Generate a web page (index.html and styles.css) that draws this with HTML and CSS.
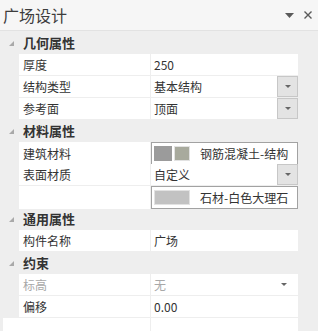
FILE: index.html
```html
<!DOCTYPE html>
<html lang="zh">
<head>
  <meta charset="UTF-8" />
  <title>广场设计</title>
  <link rel="stylesheet" href="styles.css">
</head>
<body>
  <div class="panel">
    <div class="titlebar">
      <span class="title">广场设计</span>
      <div class="tools">
        <svg width="9" height="5" viewBox="0 0 9 5"><polygon points="0,0 9,0 4.5,5" fill="#5a5a5a"/></svg>
        <svg width="8" height="8" viewBox="0 0 8 8"><path d="M0.5 0.5 L7.5 7.5 M7.5 0.5 L0.5 7.5" stroke="#5a5a5a" stroke-width="1.4"/></svg>
      </div>
    </div>

    <div class="grid">
      <!-- 几何属性 -->
      <div class="group"><svg class="caret" width="5" height="5" viewBox="0 0 5 5"><polygon points="5,0 5,5 0,5" fill="#a9a9a9"/></svg>几何属性</div>
      <div class="row"><div class="label">厚度</div><div class="value">250</div></div>
      <div class="row">
        <div class="label">结构类型</div>
        <div class="value">基本结构<span class="drop"><i></i></span></div>
      </div>
      <div class="row">
        <div class="label">参考面</div>
        <div class="value">顶面<span class="drop"><i></i></span></div>
      </div>

      <!-- 材料属性 -->
      <div class="group"><svg class="caret" width="5" height="5" viewBox="0 0 5 5"><polygon points="5,0 5,5 0,5" fill="#a9a9a9"/></svg>材料属性</div>
      <div class="row">
        <div class="label">建筑材料</div>
        <div class="value material">
          <span class="swatch dark"></span><span class="swatch sage"></span>
          <span class="mat-name">钢筋混凝土-结构</span>
        </div>
      </div>
      <div class="row">
        <div class="label">表面材质</div>
        <div class="value">自定义<span class="drop"><i></i></span></div>
      </div>
      <div class="row">
        <div class="label"></div>
        <div class="value material">
          <span class="swatch wide"></span>
          <span class="mat-name">石材-白色大理石</span>
        </div>
      </div>

      <!-- 通用属性 -->
      <div class="group"><svg class="caret" width="5" height="5" viewBox="0 0 5 5"><polygon points="5,0 5,5 0,5" fill="#a9a9a9"/></svg>通用属性</div>
      <div class="row"><div class="label">构件名称</div><div class="value">广场</div></div>

      <!-- 约束 -->
      <div class="group"><svg class="caret" width="5" height="5" viewBox="0 0 5 5"><polygon points="5,0 5,5 0,5" fill="#a9a9a9"/></svg>约束</div>
      <div class="row disabled">
        <div class="label">标高</div>
        <div class="value">无<span class="drop flat"><i></i></span></div>
      </div>
      <div class="row"><div class="label">偏移</div><div class="value">0.00</div></div>

      <div class="row loose"><div class="label"></div><div class="value"></div></div>
    </div>
  </div>
</body>
</html>
```

FILE: styles.css
```css
body {
  margin: 0;
  background: #eeeeee;
  font-family: "Noto Sans CJK SC", "DejaVu Sans", sans-serif;
  font-size: 12px;
  color: #333;
}

.panel {
  width: 318px;
  height: 331px;
  overflow: hidden;
}

.titlebar {
  height: 30px;
  background: #f6f6f6;
  border-bottom: 1px solid #e2e2e2;
  display: flex;
  align-items: center;
  justify-content: space-between;
  padding: 0 6px 0 3px;
}

.title {
  font-size: 16px;
  color: #3d3d3d;
  line-height: 30px;
}

.tools {
  display: flex;
  align-items: center;
  gap: 10px;
}

.grid {
  display: flex;
  flex-direction: column;
  gap: 1px;
  padding-top: 1px;
}

.group {
  height: 21px;
  display: flex;
  align-items: center;
  font-size: 13px;
  font-weight: bold;
  color: #333;
}

.caret {
  margin: 1px 9px 0 9px;
}

.row {
  display: grid;
  grid-template-columns: 131px 147px;
  gap: 1px;
  height: 21px;
  padding-left: 19px;
}

.row.loose {
  padding-left: 3px;
  grid-template-columns: 147px 147px;
}

.label,
.value {
  background: #fff;
  display: flex;
  align-items: center;
  line-height: 21px;
  white-space: nowrap;
}

.label {
  padding-left: 4px;
}

.value {
  padding-left: 3px;
}

.disabled .label,
.disabled .value {
  color: #a8a8a8;
}

/* dropdown buttons */
.drop {
  margin-left: auto;
  width: 19px;
  height: 19px;
  background: #e3e3e3;
  border: 1px solid #c7c7c7;
  display: flex;
  align-items: center;
  justify-content: center;
}

.drop i {
  width: 0;
  height: 0;
  border-left: 3px solid transparent;
  border-right: 3px solid transparent;
  border-top: 3px solid #666;
}

.drop.flat {
  background: none;
  border-color: transparent;
  margin-right: 4px;
}

/* material picker */
.value.material {
  border: 1px solid #a2a2a2;
  padding-left: 2px;
}

.swatch {
  height: 15px;
  width: 18px;
  margin-right: 2px;
  box-sizing: border-box;
}

.swatch.dark {
  background: #9b9b9b;
}

.swatch.sage {
  width: 16px;
  background: #a8aa9d;
  border: 1px solid #e2e2e2;
}

.swatch.wide {
  width: 36px;
  background: #c2c2c2;
  border: 1px solid #e2e2e2;
}

.mat-name {
  margin-left: 8px;
  color: #333;
}
```
